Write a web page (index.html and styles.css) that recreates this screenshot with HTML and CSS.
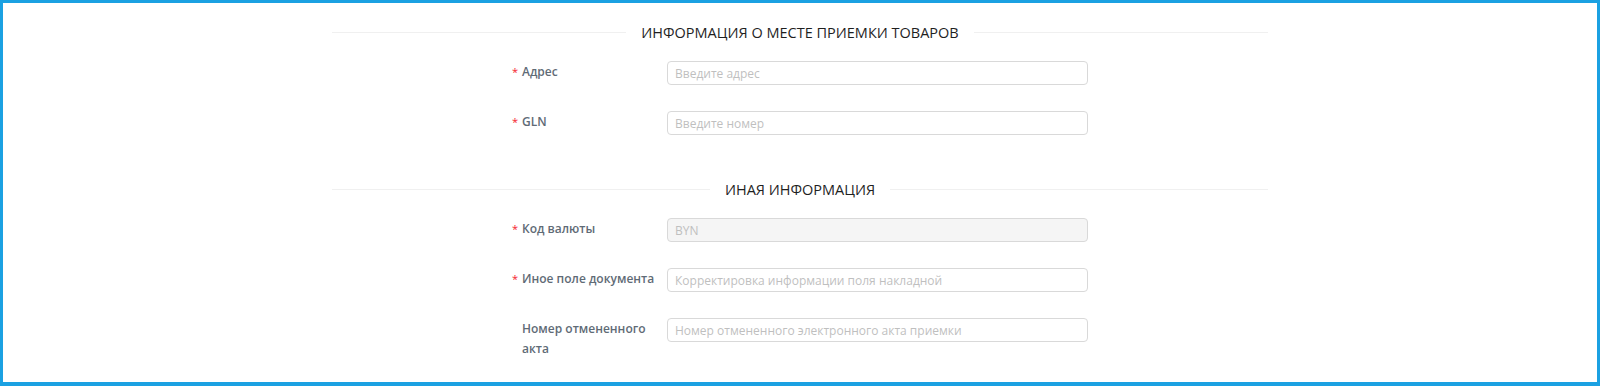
FILE: index.html
```html
<!DOCTYPE html>
<html lang="ru">
<head>
    <meta charset="UTF-8">
    <meta name="viewport" content="width=device-width, initial-scale=1.0">
    <title>Информация о приемке</title>
    <link rel="stylesheet" href="styles.css">
</head>
<body>
    <div class="frame">
        <section class="form-section">
            <div class="divider">Информация о месте приемки товаров</div>

            <div class="form-row">
                <label class="form-label required" for="address">Адрес</label>
                <input class="form-input" type="text" id="address" placeholder="Введите адрес">
            </div>
            <div class="form-row">
                <label class="form-label required" for="gln">GLN</label>
                <input class="form-input" type="text" id="gln" placeholder="Введите номер">
            </div>
        </section>

        <section class="form-section">
            <div class="divider">Иная информация</div>

            <div class="form-row">
                <label class="form-label required" for="currency">Код валюты</label>
                <input class="form-input" type="text" id="currency" value="BYN" disabled>
            </div>
            <div class="form-row">
                <label class="form-label required" for="other">Иное поле документа</label>
                <input class="form-input" type="text" id="other" placeholder="Корректировка информации поля накладной">
            </div>
            <div class="form-row">
                <label class="form-label" for="cancelled">Номер отмененного акта</label>
                <input class="form-input" type="text" id="cancelled" placeholder="Номер отмененного электронного акта приемки">
            </div>
        </section>
    </div>
</body>
</html>
```

FILE: styles.css
```css
body {
    margin: 0;
    padding: 0;
    font-family: "Open Sans", Arial, sans-serif;
    color: #333;
    background: #fff;
}
.frame {
    box-sizing: border-box;
    height: 386px;
    border: 3px solid #1ba1e2;
    border-bottom-width: 4px;
    padding-top: 18px;
    overflow: hidden;
}
.form-section {
    margin-bottom: 43px;
}
.divider {
    display: flex;
    align-items: center;
    gap: 15px;
    width: 936px;
    height: 22px;
    margin: 0 auto 18px;
    font-size: 14.5px;
    font-weight: 500;
    color: #1f1f1f;
    text-transform: uppercase;
    white-space: nowrap;
}
.divider::before,
.divider::after {
    content: '';
    flex: 1;
    border-top: 1px solid #f0f0f0;
}
.form-row {
    display: flex;
    align-items: flex-start;
    width: 576px;
    margin: 0 auto 26px;
}
.form-label {
    box-sizing: border-box;
    width: 155px;
    flex-shrink: 0;
    padding-top: 1px;
    padding-left: 10px;
    font-size: 12px;
    font-weight: 600;
    line-height: 20px;
    color: #5f6b76;
}
.form-label.required {
    padding-left: 0;
}
.form-label.required::before {
    content: '*';
    display: inline-block;
    width: 10px;
    font-size: 11px;
    font-weight: 400;
    color: #f5222d;
}
.form-input {
    flex: 1;
    box-sizing: border-box;
    height: 24px;
    padding: 0 7px;
    border: 1px solid #d9d9d9;
    border-radius: 4px;
    font-family: inherit;
    font-size: 12px;
    color: #333;
    outline: none;
}
.form-input::placeholder {
    color: #bfbfbf;
}
.form-input:disabled {
    background: #f5f5f5;
    color: #bfbfbf;
}
```
